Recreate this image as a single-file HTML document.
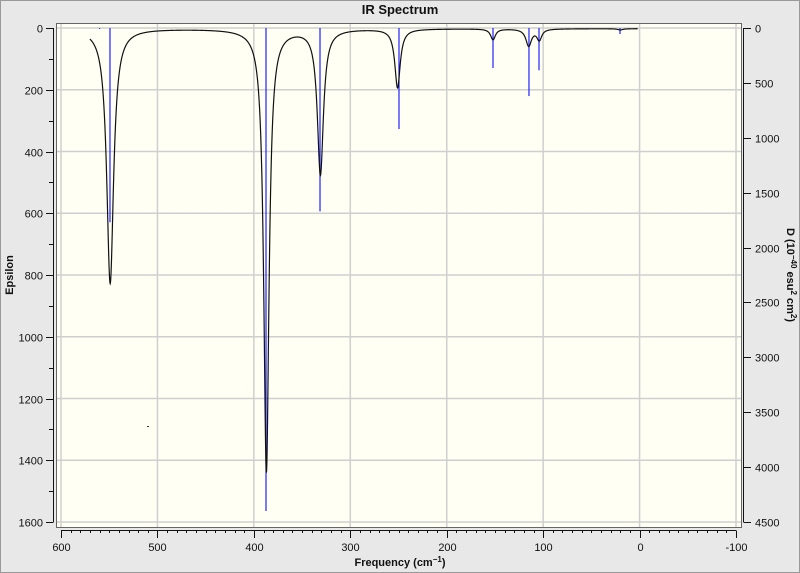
<!DOCTYPE html>
<html><head><meta charset="utf-8"><style>
html,body{margin:0;padding:0;background:#e8e8e8;}
svg{display:block;font-family:"Liberation Sans",sans-serif;}
</style></head><body>
<svg id="s" width="800" height="573" viewBox="0 0 800 573" xmlns="http://www.w3.org/2000/svg">
<rect x="0.5" y="0.5" width="799" height="572" fill="#e8e8e8" stroke="#999"/>
<text x="400" y="14" text-anchor="middle" font-size="13" font-weight="bold" fill="#111">IR Spectrum</text>
<rect x="56.5" y="23.5" width="685" height="504" fill="#fffff4" stroke="#666"/>
<g id="grid" stroke="#cfcfcf" stroke-width="1.5"></g>
<g id="axes" stroke="#111" stroke-width="1" fill="none"></g>
<g id="lab" font-size="11" fill="#111"></g>
<g id="sticks" stroke="#2222ff" stroke-width="1.2"></g>
<path id="curve" fill="none" stroke="#111" stroke-width="1.2"/>
<text x="400" y="566" text-anchor="middle" font-size="11" font-weight="bold" fill="#111">Frequency (cm<tspan dy="-4" font-size="8">−1</tspan><tspan dy="4">)</tspan></text>
<text transform="translate(13,275) rotate(-90)" text-anchor="middle" font-size="11" font-weight="bold" fill="#111">Epsilon</text>
<text transform="translate(787,275) rotate(90)" text-anchor="middle" font-size="11" font-weight="bold" fill="#111">D (10<tspan dy="-4" font-size="8">−40</tspan><tspan dy="4"> esu</tspan><tspan dy="-4" font-size="8">2</tspan><tspan dy="4"> cm</tspan><tspan dy="-4" font-size="8">2</tspan><tspan dy="4">)</tspan></text>
</svg>
<script>
var NS="http://www.w3.org/2000/svg";
function X(f){return 61+(600-f)*0.9643;}
function Ye(e){return 28+e*0.30875;}
function Yd(d){return 28+d*0.10978;}
function el(p,t,a,txt){var e=document.createElementNS(NS,t);for(var k in a)e.setAttribute(k,a[k]);if(txt!=null)e.textContent=txt;document.getElementById(p).appendChild(e);}
for(var f=600;f>=-100;f-=100){var x=X(f);el("grid","line",{x1:x,y1:24,x2:x,y2:527});}
for(var e=0;e<=1600;e+=200){var y=Ye(e);el("grid","line",{x1:57,y1:y,x2:741,y2:y});}
el("axes","line",{x1:53.5,y1:Ye(0),x2:53.5,y2:Ye(1600)});
for(var e=0;e<=1600;e+=100){var y=Math.round(Ye(e))+.5;el("axes","line",{x1:e%200==0?46:49,y1:y,x2:53.5,y2:y});if(e%200==0)el("lab","text",{x:43,y:y+4,"text-anchor":"end"},String(e));}
el("axes","line",{x1:743.5,y1:Yd(0),x2:743.5,y2:Yd(4500)});
for(var d=0;d<=4500;d+=500){var y=Math.round(Yd(d))+.5;el("axes","line",{x1:743.5,y1:y,x2:751,y2:y});el("lab","text",{x:755,y:y+4},String(d));}
el("axes","line",{x1:X(600),y1:530.5,x2:X(-100),y2:530.5});
for(var f=600;f>=-100;f-=10){var x=Math.round(X(f))+.5;var maj=f%100==0;el("axes","line",{x1:x,y1:maj?538:533,x2:x,y2:530.5});if(maj)el("lab","text",{x:x,y:551,"text-anchor":"middle"},f<0?"-100":String(f));}
var st=[[549.2,1770],[387.4,4400],[331.4,1670],[249.5,920],[152,365],[114.7,620],[104.3,385],[20.3,55],[560,8]];
st.forEach(function(s){var x=X(s[0]);el("sticks","line",{x1:x,y1:Yd(0),x2:x,y2:Yd(s[1])});});
var pk=[[549,825,4.3],[387,1435,3.3],[331,470,3.8],[251,190,3.4],[152,35,3],[115,55,3.5],[104,35,3],[20,4,3]];
var d="";
for(var f=570;f>=2;f-=0.25){var v=2;pk.forEach(function(p){var g=p[2];v+=p[1]*g*g/((f-p[0])*(f-p[0])+g*g);});
d+=(d?"L":"M")+X(f).toFixed(2)+","+Ye(v).toFixed(2);}
document.getElementById("curve").setAttribute("d",d);
</script>
<div style="position:absolute;left:147px;top:426px;width:2px;height:1px;background:#333"></div>
</body></html>
